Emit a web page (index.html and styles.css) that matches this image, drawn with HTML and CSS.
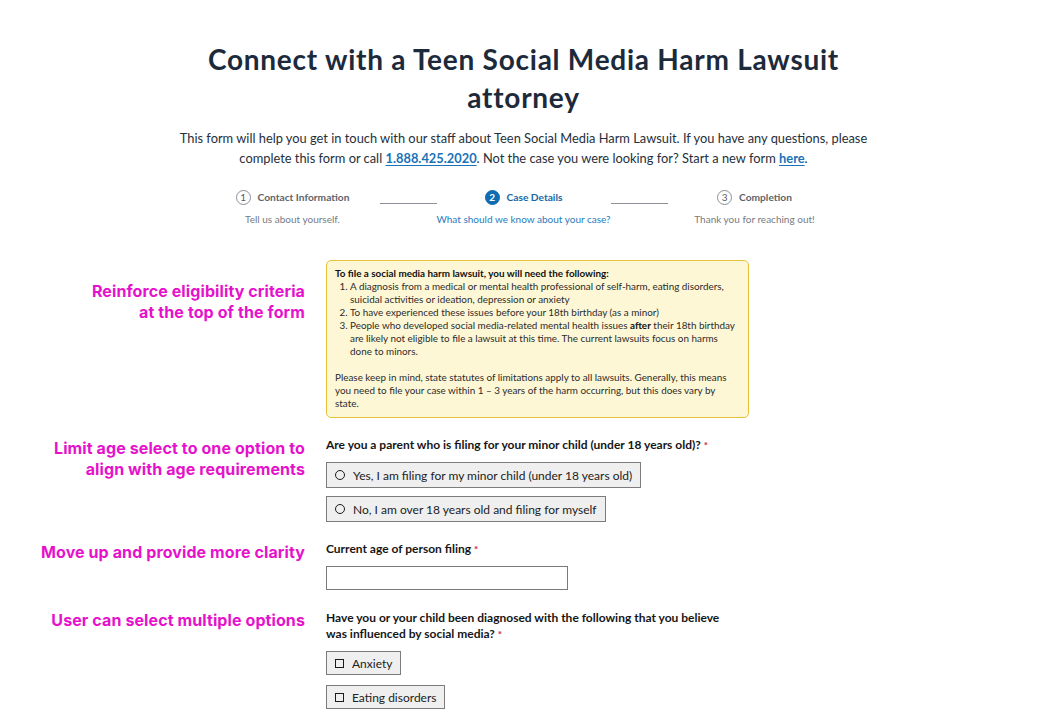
FILE: index.html
```html
<!DOCTYPE html>
<html lang="en">
<head>
<meta charset="utf-8">
<title>Teen Social Media Harm Lawsuit</title>
<link rel="stylesheet" href="styles.css">
</head>
<body>
<div class="page">
  <header class="intro">
    <h1 class="title">Connect with a Teen Social Media Harm Lawsuit<br>attorney</h1>
    <p class="lead">This form will help you get in touch with our staff about Teen Social Media Harm Lawsuit. If you have any questions, please<br>complete this form or call <a class="link" href="#">1.888.425.2020</a>. Not the case you were looking for? Start a new form <a class="link" href="#">here</a>.</p>
  </header>

  <nav class="steps">
    <div class="step">
      <div class="step-head"><span class="step-num">1</span><span class="step-label">Contact Information</span></div>
      <div class="step-sub">Tell us about yourself.</div>
    </div>
    <div class="step-line"></div>
    <div class="step active">
      <div class="step-head"><span class="step-num">2</span><span class="step-label">Case Details</span></div>
      <div class="step-sub">What should we know about your case?</div>
    </div>
    <div class="step-line"></div>
    <div class="step">
      <div class="step-head"><span class="step-num">3</span><span class="step-label">Completion</span></div>
      <div class="step-sub">Thank you for reaching out!</div>
    </div>
  </nav>

  <section class="row row-first">
    <div class="note note-first">Reinforce eligibility criteria<br>at the top of the form</div>
    <div class="notice">
      <p class="notice-head">To file a social media harm lawsuit, you will need the following:</p>
      <ol class="notice-list">
        <li>A diagnosis from a medical or mental health professional of self-harm, eating disorders, suicidal activities or ideation, depression or anxiety</li>
        <li>To have experienced these issues before your 18th birthday (as a minor)</li>
        <li>People who developed social media-related mental health issues <b>after</b> their 18th birthday are likely not eligible to file a lawsuit at this time. The current lawsuits focus on harms done to minors.</li>
      </ol>
      <p class="notice-foot">Please keep in mind, state statutes of limitations apply to all lawsuits. Generally, this means you need to file your case within 1 – 3 years of the harm occurring, but this does vary by state.</p>
    </div>
  </section>

  <section class="row">
    <div class="note">Limit age select to one option to<br>align with age requirements</div>
    <div class="field">
      <div class="label">Are you a parent who is filing for your minor child (under 18 years old)? <span class="req">*</span></div>
      <div class="options">
        <label class="option"><span class="radio"></span>Yes, I am filing for my minor child (under 18 years old)</label>
        <label class="option"><span class="radio"></span>No, I am over 18 years old and filing for myself</label>
      </div>
    </div>
  </section>

  <section class="row">
    <div class="note">Move up and provide more clarity</div>
    <div class="field">
      <div class="label">Current age of person filing <span class="req">*</span></div>
      <div class="text-input"></div>
    </div>
  </section>

  <section class="row">
    <div class="note">User can select multiple options</div>
    <div class="field">
      <div class="label label-wrap">Have you or your child been diagnosed with the following that you believe<br>was influenced by social media? <span class="req">*</span></div>
      <div class="options options-check">
        <label class="option"><span class="check"></span>Anxiety</label>
        <label class="option"><span class="check"></span>Eating disorders</label>
      </div>
    </div>
  </section>
</div>
</body>
</html>
```

FILE: styles.css
```css
* { box-sizing: border-box; }

html, body {
  margin: 0;
  padding: 0;
  background: #ffffff;
  overflow: hidden;
}

body {
  font-family: Lato, "Liberation Sans", sans-serif;
  color: #1f2a37;
}

.page {
  width: 1047px;
}

.intro {
  text-align: center;
  padding-top: 40px;
}

.title {
  margin: 0;
  font-size: 28px;
  line-height: 38px;
  font-weight: 700;
  color: #1c2a3b;
  letter-spacing: 0.75px;
}

.lead {
  margin: 12px 0 0;
  font-size: 12.85px;
  line-height: 20px;
  color: #25303c;
}

.link {
  color: #1a72b8;
  font-weight: 700;
  text-decoration: underline;
  text-underline-offset: 2px;
}

.steps {
  display: flex;
  justify-content: center;
  margin-top: 21px;
}

.step {
  width: 174px;
  display: flex;
  flex-direction: column;
  align-items: center;
  white-space: nowrap;
}

.step-head {
  display: flex;
  align-items: center;
  gap: 7px;
  height: 16px;
}

.step-num {
  width: 15px;
  height: 15px;
  border: 1px solid #8a8f96;
  border-radius: 50%;
  font-size: 10px;
  display: flex;
  align-items: center;
  justify-content: center;
  color: #555b62;
}

.step-label {
  font-size: 10.2px;
  font-weight: 700;
  color: #5d636b;
}

.step-sub {
  margin-top: 7px;
  font-size: 10px;
  line-height: 14px;
  color: #767c83;
}

.step.active .step-num {
  background: #0d6cb2;
  border-color: #0d6cb2;
  color: #ffffff;
  font-weight: 700;
}

.step.active .step-label { color: #1667a8; }
.step.active .step-sub { color: #2a7bbd; }

.step-line {
  width: 57px;
  height: 1px;
  background: #8d9197;
  margin-top: 14px;
}

.row {
  display: grid;
  grid-template-columns: 305px 423px;
  column-gap: 21px;
  margin-top: 20px;
}

.row-first {
  margin-top: 34px;
}

.note {
  font-family: Inter, "Noto Sans", sans-serif;
  font-size: 16px;
  line-height: 21px;
  font-weight: 700;
  color: #e612cb;
  text-align: right;
  letter-spacing: 0.1px;
}

.note-first {
  padding-top: 21px;
}

.notice {
  background: #fef7d5;
  border: 1px solid #e6c23a;
  border-radius: 5px;
  padding: 6px 6px 7px 8px;
  font-size: 9.9px;
  line-height: 13px;
  color: #2b2b2b;
}

.notice p { margin: 0; }

.notice-head {
  font-weight: 700;
  color: #111;
}

.notice-list {
  margin: 0 0 13px;
  padding-left: 15px;
}

.notice-list b { color: #111; }

.notice .notice-foot {
  padding-right: 10px;
}

.field {
  display: flex;
  flex-direction: column;
}

.label {
  font-size: 12px;
  line-height: 14px;
  font-weight: 700;
  color: #161616;
}

.label-wrap {
  line-height: 16px;
}

.req {
  color: #d9142b;
  font-size: 10px;
}

.options {
  display: flex;
  flex-direction: column;
  align-items: flex-start;
  gap: 8px;
  margin-top: 10px;
}

.options-check {
  margin-top: 9px;
  gap: 10px;
}

.option {
  display: flex;
  align-items: center;
  gap: 8px;
  height: 26px;
  padding: 0 8px 0 8px;
  border: 1px solid #7c7c7c;
  background: #efefef;
  font-size: 12px;
  color: #222;
}

.options-check .option {
  height: 24px;
}

.radio {
  width: 10px;
  height: 10px;
  border: 1.4px solid #1b1b1b;
  border-radius: 50%;
  flex: none;
}

.check {
  width: 9px;
  height: 9px;
  border: 1.4px solid #1b1b1b;
  flex: none;
}

.text-input {
  margin-top: 10px;
  width: 242px;
  height: 24px;
  border: 1px solid #7a7a7a;
  background: #fff;
}
```
